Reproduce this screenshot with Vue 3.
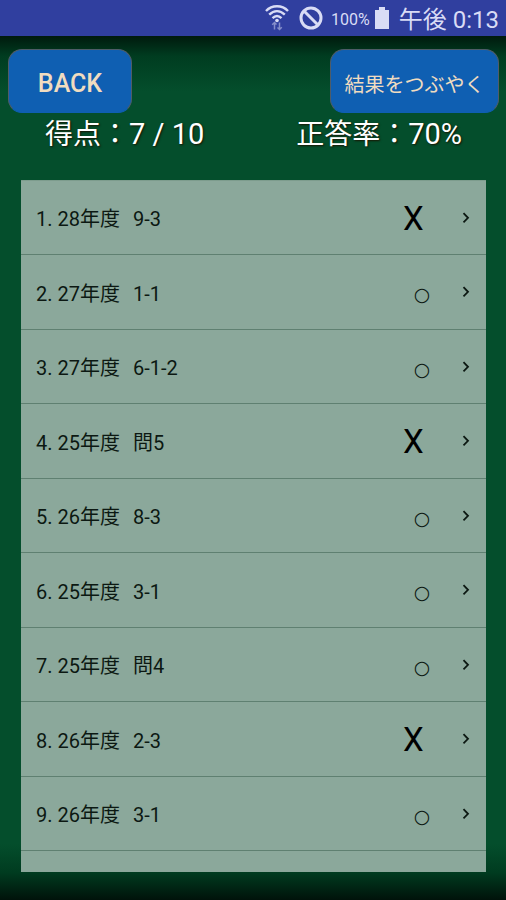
<script setup>
const results = [
  { year: '28年度', question: '9-3', correct: false },
  { year: '27年度', question: '1-1', correct: true },
  { year: '27年度', question: '6-1-2', correct: true },
  { year: '25年度', question: '問5', correct: false },
  { year: '26年度', question: '8-3', correct: true },
  { year: '25年度', question: '3-1', correct: true },
  { year: '25年度', question: '問4', correct: true },
  { year: '26年度', question: '2-3', correct: false },
  { year: '26年度', question: '3-1', correct: true },
]
</script>

<template>
  <div class="screen">
    <header class="status">
      <svg class="wifi" viewBox="0 0 24 26" aria-hidden="true">
        <g fill="none" stroke="currentColor" stroke-width="2.400">
          <path d="M1 6C7 -0.300 17 -0.300 23 6" />
          <path d="M4.200 9.700C9 5 15 5 19.800 9.700" />
          <path d="M7.500 13.200C10.300 10.500 13.700 10.500 16.500 13.200" />
        </g>
        <circle cx="12" cy="15.500" r="1.800" fill="currentColor" />
        <g class="arrows" fill="none" stroke="currentColor" stroke-width="1.500">
          <path d="M9.500 24.500V17.500M7.200 19.800l2.300-2.300L11.500 19.500" />
          <path d="M14.500 17.500V24.500M12.500 22.500l2 2 2.300-2.300" />
        </g>
      </svg>
      <svg class="block" viewBox="0 0 24 24" aria-hidden="true">
        <g fill="none" stroke="currentColor" stroke-width="3">
          <circle cx="12" cy="12" r="10" />
          <path d="M5 5l14 14" />
        </g>
      </svg>
      <span class="percent">100%</span>
      <svg class="battery" viewBox="0 0 14 22" aria-hidden="true">
        <path fill="currentColor" d="M4 0h6v3h4v19H0V3h4z" />
      </svg>
      <time class="clock">午後 0:13</time>
    </header>

    <main class="board">
      <nav class="actions">
        <button type="button" class="btn back">BACK</button>
        <button type="button" class="btn tweet">結果をつぶやく</button>
      </nav>
      <div class="summary">
        <span><span class="label">得点：</span>7 / 10</span>
        <span><span class="label">正答率：</span>70%</span>
      </div>
      <ul class="list">
        <li v-for="(r, i) in results" :key="i" class="item">
          <a href="#" class="row">
            <span class="title">{{ i + 1 }}. {{ r.year }}<span class="question">{{ r.question }}</span></span>
            <span v-if="r.correct" class="mark circle">○</span>
            <span v-else class="mark cross">X</span>
            <svg class="chevron" viewBox="0 0 8 12" aria-hidden="true">
              <path d="M1.500 1.200L6 5.800l-4.500 4.600" fill="none" stroke="currentColor" stroke-width="1.800" />
            </svg>
          </a>
        </li>
        <li class="rest"></li>
      </ul>
    </main>
  </div>
</template>

<style>
body {
  margin: 0;
  background: #000;
}
</style>

<style scoped>
.screen {
  display: flex;
  flex-direction: column;
  height: 100vh;
  overflow: hidden;
  font-family: Roboto, "Noto Sans CJK JP", sans-serif;
}

.status {
  flex: none;
  display: flex;
  align-items: center;
  justify-content: flex-end;
  box-sizing: border-box;
  height: 36px;
  padding: 0 7px;
  background: #303f9f;
  color: #d9dcf5;
}

.wifi {
  width: 24px;
  height: 26px;
  margin-right: 10px;
}

.arrows {
  opacity: 0.5;
}

.block {
  width: 24px;
  height: 24px;
  margin-right: 8px;
}

.percent {
  padding-top: 2px;
  margin-right: 5px;
  font-size: 16px;
}

.battery {
  width: 14px;
  height: 22px;
  margin-right: 10px;
}

.clock {
  padding-top: 4px;
  font-size: 24px;
  line-height: 32px;
}

.board {
  flex: 1;
  min-height: 0;
  display: flex;
  flex-direction: column;
  box-sizing: border-box;
  padding: 13px 7px 28px 8px;
  background: linear-gradient(#001a0d 0, #003c20 20px, #044e2c 56px, #044e2c calc(100% - 56px), #003c20 calc(100% - 28px), #00120a 100%);
}

.actions {
  display: flex;
  justify-content: space-between;
}

.btn {
  box-sizing: border-box;
  height: 64px;
  padding: 4px 12px 0;
  border: 1px solid #4f5c68;
  border-bottom-color: #0f5fb2;
  border-radius: 14px;
  background: #0f5fb2;
  color: #f0dcc0;
  font-family: inherit;
}

.back {
  width: 124px;
  font-size: 25px;
  font-weight: 500;
}

.tweet {
  width: 169px;
  font-size: 20px;
}

.summary {
  display: flex;
  justify-content: space-between;
  padding: 0 37px;
  margin-bottom: 24px;
  color: #fff;
  font-size: 29px;
  line-height: 42px;
  text-shadow: 1px 1px 2px #1a1400;
}

.label {
  font-size: 28px;
}

.list {
  flex: 1;
  min-height: 0;
  margin: 0 13px;
  padding: 0;
  overflow: hidden;
  list-style: none;
  background: #8ba89b;
  border-top: 1px solid #7d9c8d;
}

.item {
  box-sizing: border-box;
  height: 74px;
  border-bottom: 1px solid #5f8071;
}

.item:nth-child(even) {
  height: 75px;
}

.row {
  display: flex;
  align-items: center;
  height: 100%;
  padding: 0 16px 0 15px;
  color: #0c1812;
  text-decoration: none;
}

.title {
  flex: 1;
  font-size: 20px;
}

.question {
  margin-left: 13px;
}

.mark {
  width: 38px;
  margin-right: 21px;
}

.cross {
  padding-top: 2px;
  color: #000;
  font-size: 33px;
  line-height: 40px;
}

.circle {
  padding-top: 4px;
  font-family: "DejaVu Sans", sans-serif;
  font-size: 19px;
  text-align: center;
}

.chevron {
  width: 8px;
  height: 12px;
}
</style>
